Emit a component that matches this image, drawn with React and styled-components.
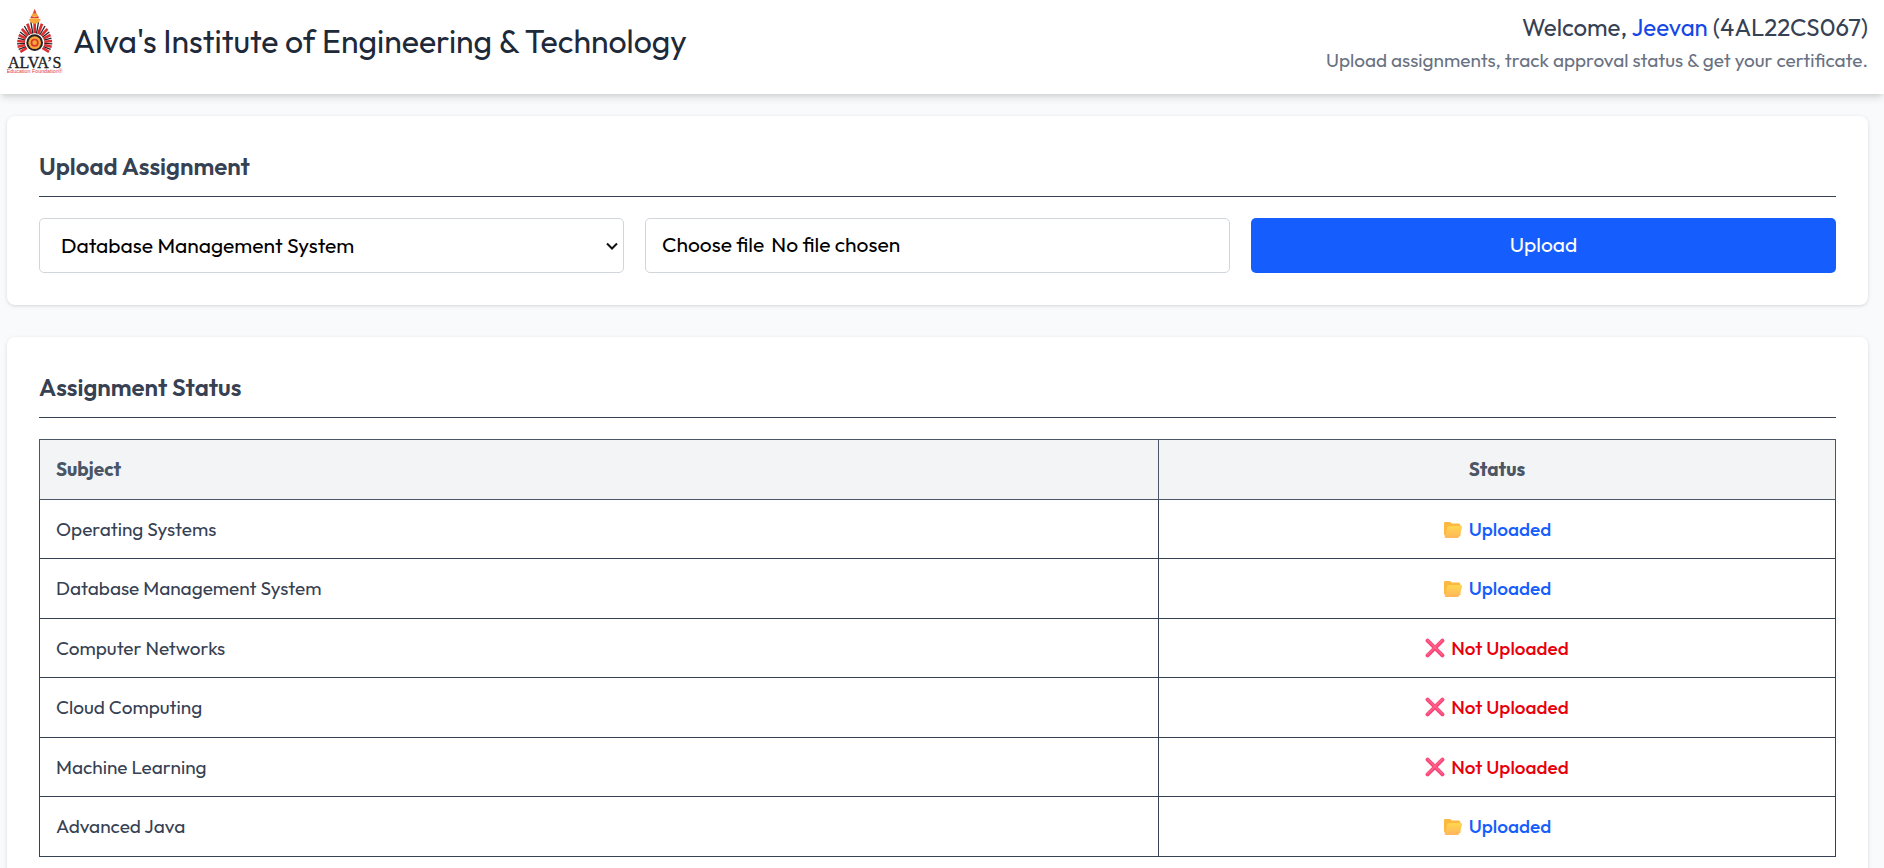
import React, { useState } from "react";
import styled, { createGlobalStyle } from "styled-components";

const GlobalStyle = createGlobalStyle`
  *, *::before, *::after { box-sizing: border-box; }
  body {
    margin: 0;
    background: #f9fafb;
    color: #364153;
    font-family: Outfit, Lato, "Liberation Sans", sans-serif;
  }
  h1, h2, p { margin: 0; }
  button, input, select { font: inherit; }
`;

const Header = styled.header`
  display: flex;
  align-items: flex-start;
  justify-content: space-between;
  gap: 24px;
  padding: 5px 16px 15px 7px;
  background: #fff;
  box-shadow: 0 5px 8px -1px rgba(0, 0, 0, 0.1), 0 3px 5px -2px rgba(0, 0, 0, 0.1);
`;

const Brand = styled.div`
  display: flex;
  align-items: center;
  gap: 10px;
`;

const Title = styled.h1`
  padding-bottom: 2px;
  color: #1e2939;
  font-size: 32px;
  line-height: 40px;
  font-weight: 400;
`;

const Greeting = styled.div`
  padding-top: 5px;
  text-align: right;
`;

const Welcome = styled.p`
  font-size: 24px;
  line-height: 34px;
`;

const StudentName = styled.span`
  color: #1447e6;
`;

const Tagline = styled.p`
  color: #6a7282;
  font-size: 19px;
  line-height: 32px;
`;

const Main = styled.main`
  display: flex;
  flex-direction: column;
  gap: 32px;
  padding: 22px 16px 32px 7px;
`;

const Card = styled.section`
  padding: 32px;
  border-radius: 8px;
  background: #fff;
  box-shadow: 0 1px 4px rgba(0, 0, 0, 0.1), 0 1px 3px -1px rgba(0, 0, 0, 0.1);
`;

const CardTitle = styled.h2`
  margin-bottom: 21px;
  padding: 1px 0 12px;
  border-bottom: 1px solid #364153;
  font-size: 24px;
  line-height: 35px;
  font-weight: 600;
`;

const Form = styled.form`
  display: grid;
  grid-template-columns: repeat(3, 1fr);
  gap: 21px;
`;

const SelectField = styled.div`
  position: relative;
`;

const SubjectSelect = styled.select`
  appearance: none;
  width: 100%;
  height: 55px;
  padding: 0 32px 2px 21px;
  border: 1px solid #d1d5dc;
  border-radius: 5px;
  background: #fff;
  color: #000;
  font-size: 21px;
`;

const SelectArrow = styled.svg`
  position: absolute;
  top: 24px;
  right: 5px;
  pointer-events: none;
`;

const FileField = styled.label`
  position: relative;
  display: flex;
  align-items: center;
  gap: 7px;
  height: 55px;
  padding: 0 16px 4px;
  border: 1px solid #d1d5dc;
  border-radius: 5px;
  background: #fff;
  color: #000;
  font-size: 21px;
`;

const FileInput = styled.input`
  position: absolute;
  inset: 0;
  width: 100%;
  opacity: 0;
  cursor: pointer;
`;

const UploadButton = styled.button`
  height: 55px;
  padding: 0 16px 4px;
  border: 0;
  border-radius: 5px;
  background: #155dfc;
  color: #fff;
  font-size: 21px;
  cursor: pointer;
`;

const StatusTable = styled.table`
  width: 100%;
  border-collapse: collapse;
  font-size: 19px;
  line-height: 26px;
`;

const Row = styled.tr`
  height: 60px;
  tbody > &:nth-child(odd) {
    height: 59px;
  }
`;

const HeadCell = styled.th`
  width: ${(p) => p.$width};
  padding: 0 16px 2px;
  border: 1px solid #4a5565;
  background: #f3f4f6;
  color: #4a5565;
  font-weight: 700;
  text-align: ${(p) => p.$align || "left"};
`;

const Cell = styled.td`
  padding: 0 16px 1px;
  border: 1px solid #364153;
  text-align: ${(p) => p.$align || "left"};
`;

const Status = styled.span`
  display: flex;
  align-items: center;
  justify-content: center;
  gap: 6px;
  color: ${(p) => (p.$uploaded ? "#155dfc" : "#e7000b")};
  font-weight: 500;
`;

const RAYS = Array.from({ length: 25 }, (_, i) => {
  const deg = -216 + i * 10.5;
  const a = (deg * Math.PI) / 180;
  const lift = Math.max(0, -Math.sin(a));
  const outer = 47 + 16 * lift * lift;
  return {
    x1: 103 + 29 * Math.cos(a),
    y1: 128 + 27 * Math.sin(a),
    x2: 103 + (outer + 6 * (1 - lift)) * Math.cos(a),
    y2: 128 + outer * Math.sin(a),
    dark: i % 2 === 1,
  };
});

function Logo() {
  return (
    <svg width="56" height="74" viewBox="20 15 168 222" role="img" aria-label="Alva's Education Foundation">
      {RAYS.map((r, i) => (
        <line
          key={i}
          x1={r.x1}
          y1={r.y1}
          x2={r.x2}
          y2={r.y2}
          stroke={r.dark ? "#2b2326" : "#dc2f31"}
          strokeWidth={r.dark ? 4 : 8}
        />
      ))}
      <path d="M103 26 L109 41 H97 Z" fill="#e0442c" />
      <path d="M96 41 H110 L114 50 H92 Z" fill="#f4a235" />
      <path d="M92 49 Q103 54 114 49 L116 55 H90 Z" fill="#dd3a2e" />
      <path d="M86 57 Q103 52 121 57 Q118 70 103 71 Q88 70 86 57 Z" fill="#f7a93b" />
      <circle cx="103" cy="128" r="28" fill="#fff" />
      <circle cx="103" cy="128" r="25" fill="#251f22" />
      <circle cx="103" cy="128" r="19" fill="#f6a63a" />
      <circle cx="103" cy="128" r="12" fill="#d9362c" />
      <circle cx="103" cy="128" r="7" fill="#f6a63a" />
      <text x="103" y="203" textAnchor="middle" fontFamily="Liberation Serif, serif" fontSize="48" fill="#1d1d1f" stroke="#1d1d1f" strokeWidth="1">
        ALVA’S
      </text>
      <text x="103" y="218" textAnchor="middle" fontFamily="Liberation Sans, sans-serif" fontSize="16" fill="#e23b3b">
        Education Foundation®
      </text>
    </svg>
  );
}

function FolderIcon() {
  return (
    <svg width="20" height="20" viewBox="0 0 20 20" aria-hidden="true">
      <defs>
        <linearGradient id="folderFront" x1="0" y1="0" x2="0" y2="1">
          <stop offset="0" stopColor="#ffd64f" />
          <stop offset="1" stopColor="#ffb65c" />
        </linearGradient>
      </defs>
      <path d="M1 4.2Q1 3 2.2 3H6.6Q7.4 3 8 3.8L8.8 4.6H15.6Q17.4 4.6 17.4 6.4V17H3Q1 17 1 15Z" fill="#fdb93f" />
      <path d="M6.2 7H18Q19.6 7 19.1 8.6L16.5 17.2Q16 19 14.3 19H3Q1.4 19 1.6 17.6Q2.6 17 3 15L4.2 8.6Q4.6 7 6.2 7Z" fill="url(#folderFront)" />
    </svg>
  );
}

function CrossIcon() {
  return (
    <svg width="20" height="20" viewBox="0 0 20 20" aria-hidden="true">
      <path d="M2.6 2.6L17.4 17.4M17.4 2.6L2.6 17.4" fill="none" stroke="#f8477a" strokeWidth="4" strokeLinecap="round" />
      <path d="M2.8 2.2L17.2 16.6M17 2.2L2.6 16.6" fill="none" stroke="#ff6388" strokeWidth="1.4" strokeLinecap="round" />
    </svg>
  );
}

const SUBJECTS = [
  { name: "Operating Systems", uploaded: true },
  { name: "Database Management System", uploaded: true },
  { name: "Computer Networks", uploaded: false },
  { name: "Cloud Computing", uploaded: false },
  { name: "Machine Learning", uploaded: false },
  { name: "Advanced Java", uploaded: true },
];

export default function App() {
  const [subject, setSubject] = useState("Database Management System");
  const [fileName, setFileName] = useState("");

  return (
    <>
      <GlobalStyle />
      <Header>
        <Brand>
          <Logo />
          <Title>Alva's Institute of Engineering &amp; Technology</Title>
        </Brand>
        <Greeting>
          <Welcome>
            Welcome, <StudentName>Jeevan</StudentName> (4AL22CS067)
          </Welcome>
          <Tagline>Upload assignments, track approval status &amp; get your certificate.</Tagline>
        </Greeting>
      </Header>
      <Main>
        <Card>
          <CardTitle>Upload Assignment</CardTitle>
          <Form onSubmit={(e) => e.preventDefault()}>
            <SelectField>
              <SubjectSelect aria-label="Subject" value={subject} onChange={(e) => setSubject(e.target.value)}>
                {SUBJECTS.map((s) => (
                  <option key={s.name}>{s.name}</option>
                ))}
              </SubjectSelect>
              <SelectArrow width="14" height="9" viewBox="0 0 14 9" aria-hidden="true">
                <path d="M2 1.5L7 6.5L12 1.5" fill="none" stroke="#111" strokeWidth="2" />
              </SelectArrow>
            </SelectField>
            <FileField>
              <span>Choose file</span>
              <span>{fileName || "No file chosen"}</span>
              <FileInput
                type="file"
                onChange={(e) => setFileName(e.target.files[0] ? e.target.files[0].name : "")}
              />
            </FileField>
            <UploadButton type="submit">Upload</UploadButton>
          </Form>
        </Card>
        <Card>
          <CardTitle>Assignment Status</CardTitle>
          <StatusTable>
            <thead>
              <Row>
                <HeadCell scope="col">Subject</HeadCell>
                <HeadCell scope="col" $align="center" $width="37.7%">Status</HeadCell>
              </Row>
            </thead>
            <tbody>
              {SUBJECTS.map((s) => (
                <Row key={s.name}>
                  <Cell>{s.name}</Cell>
                  <Cell $align="center">
                    <Status $uploaded={s.uploaded}>
                      {s.uploaded ? <FolderIcon /> : <CrossIcon />}
                      {s.uploaded ? "Uploaded" : "Not Uploaded"}
                    </Status>
                  </Cell>
                </Row>
              ))}
            </tbody>
          </StatusTable>
        </Card>
      </Main>
    </>
  );
}
